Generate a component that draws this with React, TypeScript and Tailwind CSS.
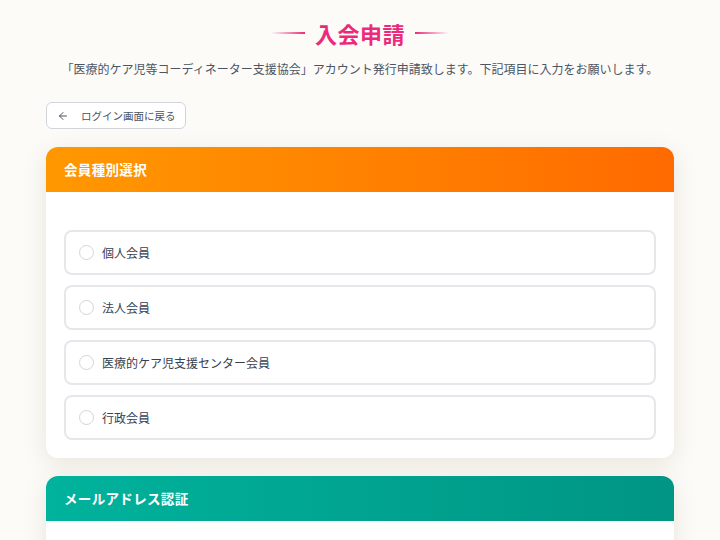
import { ArrowLeft } from 'lucide-react';

const memberTypes = ['個人会員', '法人会員', '医療的ケア児支援センター会員', '行政会員'];

function SectionHeader({ title, tone }: { title: string; tone: 'orange' | 'teal' }) {
  return (
    <div
      className={
        tone === 'orange'
          ? 'h-[45px] flex items-center px-[18px] bg-gradient-to-r from-[#ff9800] to-[#ff6a00]'
          : 'h-[45px] flex items-center px-[18px] bg-gradient-to-r from-[#00b39c] to-[#009585]'
      }
    >
      <h2 className="text-[13.5px] font-bold text-white tracking-wide">{title}</h2>
    </div>
  );
}

export default function App() {
  return (
    <div
      className="min-h-screen w-full bg-[#fcfbf8] text-[#374151]"
      style={{ fontFamily: '"Noto Sans CJK JP", "Noto Sans", sans-serif' }}
    >
      <div className="w-[628px] mx-auto pt-[17px] pb-10">
        {/* Title */}
        <div className="flex items-center justify-center gap-[10px] h-[32px]">
          <span className="w-[34px] h-[1.5px] bg-gradient-to-r from-transparent to-[#ec2a7b]" />
          <h1 className="text-[22px] font-bold text-[#ec2a7b] tracking-wide">入会申請</h1>
          <span className="w-[34px] h-[1.5px] bg-gradient-to-l from-transparent to-[#ec2a7b]" />
        </div>
        <p className="mt-[11px] text-center text-[12px] text-[#4b5563] whitespace-nowrap">
          「医療的ケア児等コーディネーター支援協会」アカウント発行申請致します。下記項目に入力をお願いします。
        </p>

        {/* Back */}
        <button className="mt-[24px] h-[27px] pl-[10px] pr-[9px] flex items-center gap-[12px] rounded-md border border-[#d1d5db] bg-white text-[10.5px] text-[#4b5563]">
          <ArrowLeft className="w-3 h-3" strokeWidth={2} />
          <span>ログイン画面に戻る</span>
        </button>

        {/* Member type */}
        <section className="mt-[18px] rounded-xl overflow-hidden bg-white shadow-[0_6px_24px_rgba(120,100,60,0.14)]">
          <SectionHeader title="会員種別選択" tone="orange" />
          <div className="pt-[38px] pb-[18px] px-[18px] flex flex-col gap-[10px]">
            {memberTypes.map((t) => (
              <label
                key={t}
                className="h-[45px] flex items-center gap-[8px] px-[13px] rounded-lg border-2 border-[#e5e7eb] bg-white cursor-pointer"
              >
                <span className="w-[15px] h-[15px] rounded-full border-[1.5px] border-[#d1d5db] bg-white" />
                <span className="text-[12px] text-[#374151]">{t}</span>
              </label>
            ))}
          </div>
        </section>

        {/* Mail auth */}
        <section className="mt-[18px] rounded-xl overflow-hidden bg-white shadow-[0_6px_24px_rgba(120,100,60,0.14)]">
          <SectionHeader title="メールアドレス認証" tone="teal" />
          <div className="h-[120px]" />
        </section>
      </div>
    </div>
  );
}
